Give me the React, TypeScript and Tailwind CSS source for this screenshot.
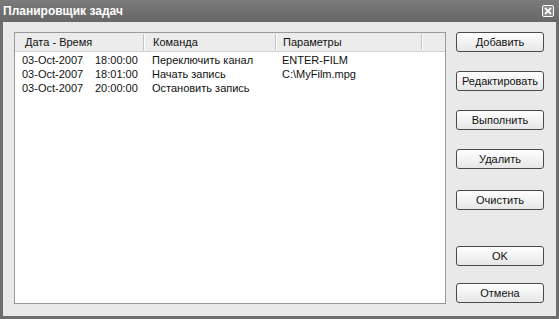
const rows = [
  { date: '03-Oct-2007', time: '18:00:00', cmd: 'Переключить канал', param: 'ENTER-FILM' },
  { date: '03-Oct-2007', time: '18:01:00', cmd: 'Начать запись', param: 'C:\\MyFilm.mpg' },
  { date: '03-Oct-2007', time: '20:00:00', cmd: 'Остановить запись', param: '' },
];

function Btn({ label, className = '' }: { label: string; className?: string }) {
  return (
    <button
      className={`flex h-[20px] w-[88px] items-center justify-center rounded-[3px] border border-[#4a4a4a] bg-gradient-to-b from-white to-[#e6e6e6] text-[11px] text-[#111]  ${className}`}
    >
      {label}
    </button>
  );
}

function Sep() {
  return <div className="h-[16px] w-[2px] border-l border-r border-l-[#c4c4c4] border-r-white" />;
}

export default function App() {
  return (
    <div
      className="flex h-[319px] w-[559px] flex-col overflow-hidden bg-[#6d6d6d]"
      style={{ fontFamily: '"Liberation Sans", Arial, sans-serif' }}
    >
      <div className="flex h-[22px] items-center justify-between bg-gradient-to-b from-[#7a7a7a] to-[#676767] pl-[3px] pr-[5px]">
        <span className="text-[12px] font-bold text-white">Планировщик задач</span>
        <div className="flex h-[12px] w-[12px] items-center justify-center rounded-[2px] border border-white bg-[#8a8a8a]">
          <svg width="8" height="8" viewBox="0 0 8 8">
            <path d="M1 1 L7 7 M7 1 L1 7" stroke="white" strokeWidth="1.8" />
          </svg>
        </div>
      </div>
      <div className="mx-[3px] mb-[3px] flex flex-1 bg-[#e9e9e9] pb-[12px] pl-[11px] pr-[11px] pt-[10px]">
        <div className="flex h-[272px] w-[432px] flex-col border border-[#9a9a9a] bg-white">
          <div className="flex h-[19px] items-center border-b border-[#d2d2d2] bg-[#ececec] text-[11px] text-[#111]">
            <div className="flex w-[130px] items-center justify-between pl-[10px]">
              <span>Дата - Время</span>
              <Sep />
            </div>
            <div className="flex w-[132px] items-center justify-between pl-[8px]">
              <span>Команда</span>
              <Sep />
            </div>
            <div className="flex w-[146px] items-center justify-between pl-[6px]">
              <span>Параметры</span>
              <Sep />
            </div>
          </div>
          <div className="flex flex-col pt-[1px] text-[11px] text-[#111]">
            {rows.map((r) => (
              <div key={r.time} className="flex h-[14px] items-center">
                <span className="w-[80px] pl-[7px]">{r.date}</span>
                <span className="w-[57px]">{r.time}</span>
                <span className="w-[130px]">{r.cmd}</span>
                <span>{r.param}</span>
              </div>
            ))}
          </div>
        </div>
        <div className="ml-[10px] flex flex-col">
          <Btn label="Добавить" />
          <Btn label="Редактировать" className="mt-[19px]" />
          <Btn label="Выполнить" className="mt-[19px]" />
          <Btn label="Удалить" className="mt-[19px]" />
          <Btn label="Очистить" className="mt-[21px]" />
          <Btn label="OK" className="mt-[36px]" />
          <Btn label="Отмена" className="mt-[17px]" />
        </div>
      </div>
    </div>
  );
}
